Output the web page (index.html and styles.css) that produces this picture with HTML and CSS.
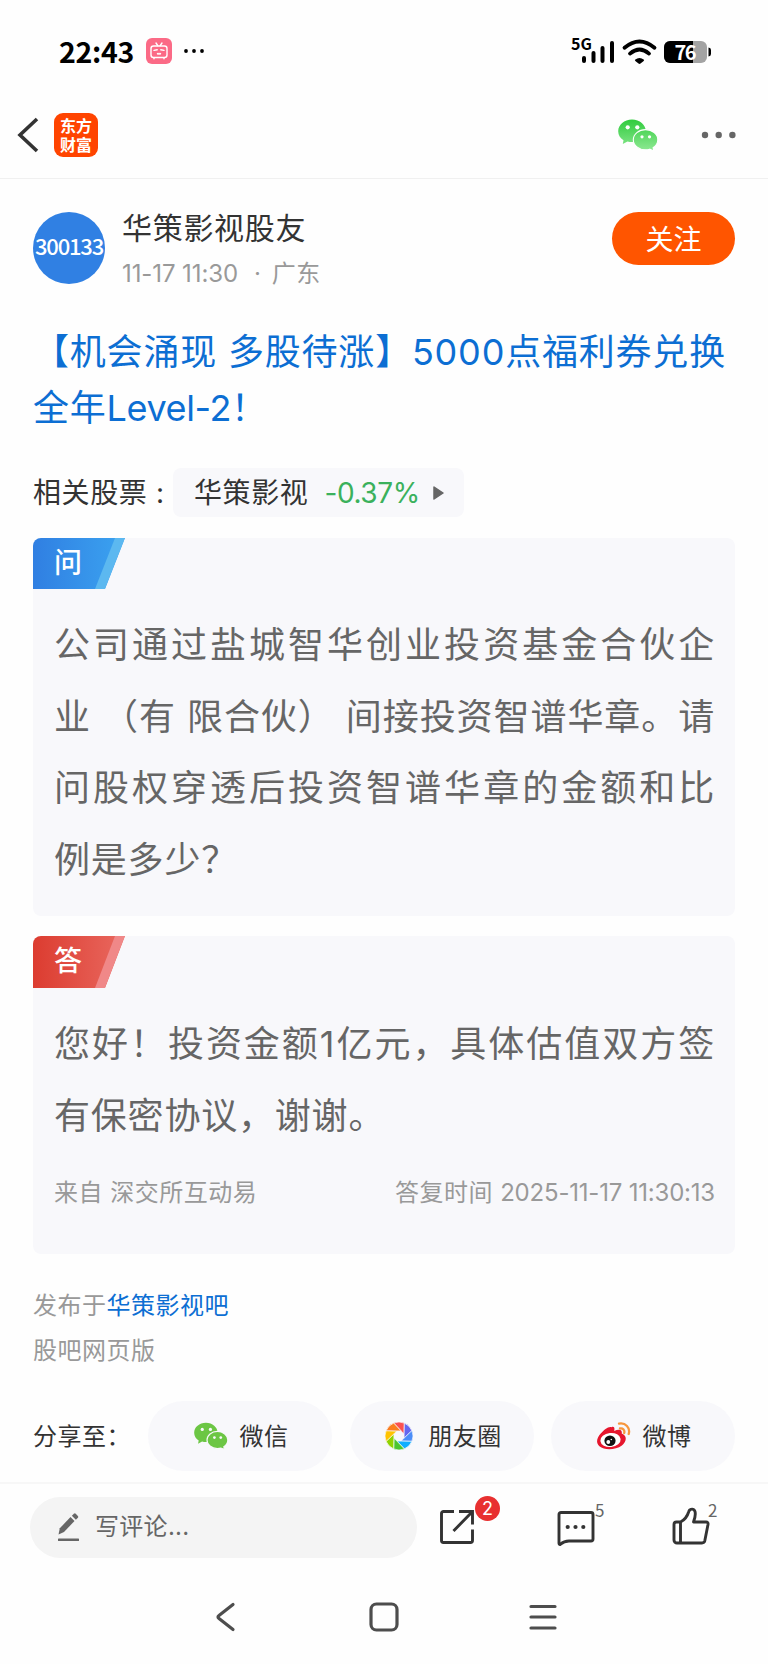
FILE: index.html
```html
<!DOCTYPE html>
<html lang="zh-CN">
<head>
    <meta charset="UTF-8">
    <meta name="viewport" content="width=device-width, initial-scale=1.0">
    <title>华策影视股友 - 股吧</title>
    <link rel="stylesheet" href="styles.css">
</head>
<body>
    <div class="status-bar">
        <span class="time">22:43</span>
        <svg class="bili" width="26" height="26" viewBox="0 0 26 26">
            <rect width="26" height="26" rx="6" fill="#fb6a86"/>
            <g fill="none" stroke="#fff" stroke-width="1.4" stroke-linecap="round">
                <rect x="5" y="8" width="16" height="11.5" rx="2.5"/>
                <path d="M10 5l1.8 2.6M16 5l-1.8 2.6M8 20.2v.6M18 20.2v.6M8 12.4l3.2-.6M18 12.4l-3.2-.6M11.5 15.6q.8.7 1.5 0q.7.7 1.5 0"/>
            </g>
        </svg>
        <svg class="more-dots" width="20" height="6" viewBox="0 0 20 6">
            <circle cx="2" cy="3" r="1.9"/><circle cx="10" cy="3" r="1.9"/><circle cx="18" cy="3" r="1.9"/>
        </svg>
        <svg class="status-icons" width="144" height="30" viewBox="0 0 144 30">
            <text x="0" y="13.500" font-size="16" font-weight="700" textLength="21">5G</text>
            <rect x="11" y="20" width="4" height="7" rx="2"/>
            <rect x="20.500" y="15" width="4" height="12" rx="2"/>
            <rect x="29.500" y="10" width="4" height="17" rx="2"/>
            <rect x="39" y="5" width="4" height="22" rx="2"/>
            <g fill="none" stroke="#000" stroke-width="3.800" stroke-linecap="round">
                <path d="M53.500 11.800q15-12.600 30 0"/>
                <path d="M59 17.600q9.500-8.200 19 0"/>
            </g>
            <path d="M64 23.700q4.500-3.600 9 0q.3.600-.3 1.200l-3.200 2.700q-1 .7-2 0l-3.200-2.700q-.6-.6-.3-1.200z"/>
            <rect x="93" y="5" width="43" height="22" rx="6" fill="#a3a3a3"/>
            <path d="M99 5h23v22h-23a6 6 0 0 1-6-6v-10a6 6 0 0 1 6-6z"/>
            <path d="M137.500 11.500q2.500.3 2.500 2.500v4q0 2.200-2.500 2.500z"/>
            <text x="103.500" y="23.500" font-size="20" font-weight="700" fill="#fff" textLength="22">76</text>
        </svg>
    </div>

    <header class="nav-bar">
        <svg class="back" width="22" height="36" viewBox="0 0 22 36">
            <path d="M20 2L3 18L20 34" fill="none" stroke="#333" stroke-width="3.600"/>
        </svg>
        <div class="logo">东方<br>财富</div>
        <svg class="wechat" width="40" height="32" viewBox="0 0 40 32">
            <defs>
                <linearGradient id="wx" x1="0" y1="0" x2="0" y2="32" gradientUnits="userSpaceOnUse">
                    <stop offset="0" stop-color="#2fcb3c"/>
                    <stop offset="1" stop-color="#8fe994"/>
                </linearGradient>
            </defs>
            <path fill="url(#wx)" d="M14 .5C6.300.5.200 5.700.200 12.200c0 3.700 2 7 5.300 9.100L4.800 25l4.700-2.500c1.400.4 3 .6 4.500.6c7.700 0 13.800-4.700 13.800-11S21.700.5 14 .5z"/>
            <path fill="url(#wx)" stroke="#fff" stroke-width="1.100" d="M27.500 10.600c-6.800 0-12.200 4.500-12.200 10.100s5.400 10.100 12.200 10.100c1.500 0 2.900-.2 4.200-.6l4.200 1.800l-.8-3.300c2.800-1.900 4.700-4.700 4.700-8c0-5.600-5.500-10.100-12.300-10.100z"/>
            <g fill="#fff"><circle cx="9.700" cy="8.300" r="2.100"/><circle cx="19.300" cy="8.300" r="2.100"/><circle cx="24" cy="17.800" r="1.600"/><circle cx="31.500" cy="17.800" r="1.600"/></g>
        </svg>
        <svg class="menu" width="36" height="8" viewBox="0 0 36 8" fill="#666">
            <circle cx="4" cy="4" r="3.200"/><circle cx="17.700" cy="4" r="3.200"/><circle cx="31.400" cy="4" r="3.200"/>
        </svg>
    </header>

    <main class="post">
        <div class="author">
            <div class="avatar">300133</div>
            <div class="author-info">
                <div class="name">华策影视股友</div>
                <div class="date">11-17 11:30<span class="dot">·</span><span class="area">广东</span></div>
            </div>
            <button class="follow">关注</button>
        </div>

        <h1 class="title">【机会涌现 多股待涨】5000点福利券兑换全年<span class="latin">Level-2</span>！</h1>

        <div class="related">
            <span class="related-label">相关股票 :</span>
            <a class="stock">
                <span class="stock-name">华策影视</span>
                <span class="change">-0.37%</span>
                <svg width="11" height="14" viewBox="0 0 11 14"><path d="M1 1L10 7L1 13z" fill="#666" stroke="#666" stroke-width="1.500" stroke-linejoin="round"/></svg>
            </a>
        </div>

        <section class="card question">
            <div class="tag">问</div>
            <p>公司通过盐城智华创业投资基金合伙企业 （有 限合伙） 间接投资智谱华章。请问股权穿透后投资智谱华章的金额和比例是多少？</p>
        </section>

        <section class="card answer">
            <div class="tag">答</div>
            <p>您好！投资金额1亿元，具体估值双方签有保密协议，谢谢。</p>
            <div class="meta">
                <span>来自 深交所互动易</span>
                <span>答复时间 <span class="reply-time">2025-11-17 11:30:13</span></span>
            </div>
        </section>

        <div class="source">
            <div>发布于<a>华策影视吧</a></div>
            <div>股吧网页版</div>
        </div>

        <div class="share">
            <span class="share-label">分享至：</span>
            <a class="pill">
                <svg width="34" height="28" viewBox="0 0 40 32">
                    <path fill="#6cc644" d="M14 .5C6.300.5.200 5.700.200 12.200c0 3.700 2 7 5.300 9.100L4.800 25l4.700-2.500c1.400.4 3 .6 4.500.6c7.700 0 13.800-4.700 13.800-11S21.700.5 14 .5z"/>
                    <path fill="#6cc644" stroke="#f8f8fb" stroke-width="1.400" d="M27.500 10.600c-6.800 0-12.200 4.500-12.200 10.100s5.400 10.100 12.200 10.100c1.500 0 2.900-.2 4.200-.6l4.200 1.800l-.8-3.300c2.800-1.900 4.700-4.700 4.700-8c0-5.600-5.500-10.100-12.300-10.100z"/>
                    <g fill="#f8f8fb"><circle cx="9.700" cy="8.300" r="1.900"/><circle cx="19.300" cy="8.300" r="1.900"/><circle cx="24" cy="17.800" r="1.600"/><circle cx="31.500" cy="17.800" r="1.600"/></g>
                </svg>
                <span>微信</span>
            </a>
            <a class="pill moments">
                <svg width="28" height="28" viewBox="-14 -14 28 28">
                    <g stroke="#f8f8fb" stroke-width=".7">
                        <path fill="#fa5151" d="M-5.400 -12.900A14 14 0 0 1 5.400 -12.900L5.100 -2.100L2.100 -5.100z"/>
                        <path fill="#6467f0" transform="rotate(45)" d="M-5.400 -12.900A14 14 0 0 1 5.400 -12.900L5.100 -2.100L2.100 -5.100z"/>
                        <path fill="#4b8df8" transform="rotate(90)" d="M-5.400 -12.900A14 14 0 0 1 5.400 -12.900L5.100 -2.100L2.100 -5.100z"/>
                        <path fill="#10aeff" transform="rotate(135)" d="M-5.400 -12.900A14 14 0 0 1 5.400 -12.900L5.100 -2.100L2.100 -5.100z"/>
                        <path fill="#4cc52f" transform="rotate(180)" d="M-5.400 -12.900A14 14 0 0 1 5.400 -12.900L5.100 -2.100L2.100 -5.100z"/>
                        <path fill="#91d300" transform="rotate(225)" d="M-5.400 -12.900A14 14 0 0 1 5.400 -12.900L5.100 -2.100L2.100 -5.100z"/>
                        <path fill="#ffc300" transform="rotate(270)" d="M-5.400 -12.900A14 14 0 0 1 5.400 -12.900L5.100 -2.100L2.100 -5.100z"/>
                        <path fill="#fa7d1e" transform="rotate(315)" d="M-5.400 -12.900A14 14 0 0 1 5.400 -12.900L5.100 -2.100L2.100 -5.100z"/>
                    </g>
                </svg>
                <span>朋友圈</span>
            </a>
            <a class="pill">
                <svg width="34" height="28" viewBox="0 0 34 28">
                    <path fill="#e6162d" d="M14.500 5.300c2.200-1.200 3.500.1 2.700 3.600c4-1.700 8.500-1.900 7.500 2.700c6 2.200 4.700 8.600.2 11.900c-6.500 4.700-17.500 5-22.500.8C-1.800 20.500.3 15.500 3.700 11.600C7 7.800 12 3.800 14.500 5.300z"/>
                    <ellipse cx="13.500" cy="18" rx="10.200" ry="7" fill="#fff" transform="rotate(-6 13.500 18)"/>
                    <ellipse cx="13" cy="18.700" rx="5.600" ry="5.300" fill="#111"/>
                    <circle cx="11.300" cy="20" r="1.900" fill="#fff"/><circle cx="14.300" cy="17.500" r=".8" fill="#fff"/>
                    <path d="M22 1.600c6.500-1.200 11.500 4 9.700 10.400M23 6.500c3-.6 5 1.700 4.200 4.500" fill="none" stroke="#f7963c" stroke-width="2.300" stroke-linecap="round"/>
                </svg>
                <span>微博</span>
            </a>
        </div>
    </main>

    <footer class="comment-bar">
        <div class="comment-input">
            <svg width="22" height="30" viewBox="0 0 22 30" fill="#666">
                <path d="M.5 22.500l1.300-6.200L12.500 5l4 4L6 20z"/>
                <path d="M13.900 3.700l2-2q.9-.8 1.800 0l2.200 2.200q.8.900 0 1.800l-2 2z"/>
                <rect x="0" y="26.500" width="21" height="2.600" rx=".6"/>
            </svg>
            <span>写评论...</span>
        </div>
        <div class="action share-action">
            <svg width="36" height="36" viewBox="0 0 36 36" fill="none" stroke="#333" stroke-width="2.900">
                <path d="M15 2.500H4.500a2 2 0 0 0-2 2V31.500a2 2 0 0 0 2 2H31.500a2 2 0 0 0 2-2V20.500"/>
                <path d="M20 2.500H33.500V15.500M33 3L14.500 22"/>
            </svg>
            <span class="badge">2</span>
        </div>
        <div class="action chat-action">
            <svg width="38" height="36" viewBox="0 0 38 36" fill="none" stroke="#333" stroke-width="2.900" stroke-linejoin="round">
                <path d="M4 2.500H34a2 2 0 0 1 2 2V29a2 2 0 0 1-2 2H12q-5 0-8.500 3.300q-1.500.6-1.500-1V4.500a2 2 0 0 1 2-2z"/>
                <g fill="#333" stroke="none"><circle cx="10.700" cy="17" r="2.100"/><circle cx="18.500" cy="17" r="2.100"/><circle cx="26.300" cy="17" r="2.100"/></g>
            </svg>
            <span class="count">5</span>
        </div>
        <div class="action like-action">
            <svg width="38" height="38" viewBox="0 0 38 38" fill="none" stroke="#333" stroke-width="2.900" stroke-linejoin="round">
                <path d="M8.500 15H4.500a2.500 2.500 0 0 0-2.500 2.500V33a3 3 0 0 0 3 3H30q2.300 0 2.800-2.200L36 17.500q.4-2.500-2-2.500H21.500Q24 8.500 23 4.500Q21.800 1.500 18.800 2.300Q17.300 2.700 16.800 4.500Q14.500 12 8.500 15V36"/>
            </svg>
            <span class="count">2</span>
        </div>
    </footer>

    <div class="system-nav">
        <svg width="30" height="30" viewBox="0 0 30 30"><path d="M23 2.500L9 13.500q-2 1.500 0 3L23 27.500"/></svg>
        <svg width="30" height="30" viewBox="0 0 30 30"><rect x="2" y="2" width="26" height="26" rx="5.500"/></svg>
        <svg width="30" height="30" viewBox="0 0 30 30"><path d="M3 4.500H27M3 15H27M3 26H27"/></svg>
    </div>
</body>
</html>
```

FILE: styles.css
```css
* {
    box-sizing: border-box;
}
body {
    margin: 0;
    width: 768px;
    height: 1664px;
    overflow: hidden;
    background: #fefefe;
    color: #333;
    font-family: Inter, "Noto Sans CJK SC", sans-serif;
}
svg {
    display: block;
    flex: none;
}

/* 状态栏 */
.status-bar {
    height: 92px;
    padding: 10px 56px 0 59px;
    display: flex;
    align-items: center;
    color: #000;
    font-family: "Noto Sans CJK SC", sans-serif;
}
.time {
    width: 74px;
    font-size: 28.5px;
    font-weight: 700;
    letter-spacing: -0.3px;
    line-height: 40px;
    white-space: nowrap;
}
.bili {
    margin-left: 13px;
}
.more-dots {
    margin-left: 12px;
}
.status-icons {
    margin-left: auto;
    margin-right: -3px;
    overflow: visible;
}

/* 顶部导航 */
.nav-bar {
    height: 87px;
    padding: 0 31px 0 17px;
    display: flex;
    align-items: center;
    border-bottom: 1px solid #f0f0f0;
}
.logo {
    width: 44px;
    height: 44px;
    margin-left: 15px;
    padding-top: 3px;
    border-radius: 9px;
    background: #ff4400;
    color: #fff;
    font-family: "Noto Sans CJK SC", sans-serif;
    font-size: 16px;
    font-weight: 700;
    line-height: 18.5px;
    text-align: center;
}
.wechat {
    margin-left: auto;
}
.menu {
    margin-left: 43px;
}

.post {
    height: 1303px;
    padding: 33px 33px 0;
}
.author {
    height: 72px;
    display: flex;
}
.avatar {
    width: 72px;
    height: 72px;
    border-radius: 50%;
    background: #3080e3;
    color: #fff;
    font-family: "Noto Sans CJK SC", sans-serif;
    font-size: 22px;
    font-weight: 500;
    letter-spacing: -1.2px;
    line-height: 67px;
    text-align: center;
}
.author-info {
    margin-left: 17px;
}
.name {
    font-size: 30px;
    letter-spacing: 0.7px;
    line-height: 33px;
}
.date {
    margin-top: 12px;
    font-size: 24px;
    letter-spacing: -0.1px;
    line-height: 34px;
    color: #999;
}
.dot {
    margin: 0 11px 0 16px;
}
.area {
    letter-spacing: 0.5px;
}
.follow {
    width: 123px;
    height: 53px;
    margin-left: auto;
    padding: 0 0 2px;
    border: none;
    border-radius: 27px;
    background: #ff5500;
    color: #fff;
    font-family: inherit;
    font-size: 28px;
}
.title {
    margin: 41px 0 0;
    font-size: 36px;
    font-weight: 400;
    letter-spacing: 0.8px;
    line-height: 55.5px;
    color: #0c6ed3;
}
.latin {
    letter-spacing: -0.4px;
}

/* 相关股票 */
.related {
    margin-top: 32px;
    display: flex;
    align-items: center;
    font-size: 28px;
    letter-spacing: 0.6px;
}
.related-label {
    width: 140px;
    padding-bottom: 3px;
    white-space: nowrap;
}
.stock {
    width: 291px;
    height: 49px;
    padding-left: 21px;
    display: flex;
    align-items: center;
    border-radius: 8px;
    background: #f8f8fb;
}
.stock-name {
    padding-bottom: 3px;
}
.change {
    width: 93px;
    margin: 0 16px;
    color: #3bb15c;
    letter-spacing: -0.4px;
}

/* 问答卡片 */
.card {
    width: 702px;
    margin-top: 21px;
    border-radius: 8px;
    background: #f8f8fb;
    overflow: hidden;
}
.question {
    height: 378px;
}
.answer {
    height: 318px;
    margin-top: 20px;
}
.tag {
    position: relative;
    width: 92px;
    height: 51px;
    padding-left: 21px;
    color: #fff;
    font-size: 28px;
    font-weight: 500;
    line-height: 50px;
    clip-path: polygon(0 0, 100% 0, 72px 100%, 0 100%);
}
/* 右侧浅色斜条 */
.tag::after {
    content: "";
    position: absolute;
    top: 0;
    right: 0;
    width: 30px;
    height: 51px;
    clip-path: polygon(20px 0, 100% 0, 10px 100%, 0 100%);
}
.question .tag {
    background: linear-gradient(90deg, #307fe2, #3ba3f0);
}
.question .tag::after {
    background: #5cb8f0;
}
.answer .tag {
    height: 52px;
    background: linear-gradient(90deg, #dc3c30, #e9685f);
}
.answer .tag::after {
    height: 52px;
    background: #f08888;
}
.card p {
    margin: 21px 20px 0 21px;
    color: #666;
    font-size: 36px;
    letter-spacing: 0.8px;
    line-height: 71.6px;
    text-align: justify;
}
.meta {
    margin: 21px 20px 0 21px;
    display: flex;
    justify-content: space-between;
    color: #999;
    font-size: 24px;
    letter-spacing: 0.5px;
    line-height: 40px;
}
.reply-time {
    letter-spacing: -0.2px;
}

.source {
    margin-top: 29px;
    color: #999;
    font-size: 24px;
    letter-spacing: 0.5px;
    line-height: 45px;
}
.source a {
    color: #0c6ed3;
}

/* 分享 */
.share {
    margin-top: 28px;
    display: flex;
    align-items: center;
    font-size: 24px;
    letter-spacing: 0.5px;
}
.share-label {
    width: 115px;
    padding-bottom: 3px;
}
.pill {
    width: 184px;
    height: 70px;
    padding-left: 2px;
    display: flex;
    align-items: center;
    justify-content: center;
    gap: 12px;
    border-radius: 35px;
    background: #f8f8fb;
}
.pill span {
    padding-bottom: 3px;
}
.pill + .pill {
    margin-left: 17.5px;
}
.pill.moments {
    gap: 15px;
    padding-left: 4px;
}

/* 底部评论栏 */
.comment-bar {
    height: 90px;
    padding: 0 0 0 30px;
    display: flex;
    align-items: flex-start;
    border-top: 2px solid #f7f7f7;
}
.comment-input {
    width: 387px;
    height: 61px;
    margin-top: 13px;
    padding: 0 0 1px 28px;
    display: flex;
    align-items: center;
    gap: 15px;
    border-radius: 31px;
    background: #f4f4f4;
    color: #666;
    font-size: 24px;
    letter-spacing: 0.3px;
}
.comment-input span {
    padding-bottom: 5px;
}
.action {
    position: relative;
}
.share-action {
    margin: 25px 0 0 22px;
}
.chat-action {
    margin: 26px 0 0 82px;
}
.like-action {
    margin: 23px 0 0 77px;
}
.badge {
    position: absolute;
    left: 36px;
    top: -13px;
    width: 25px;
    height: 25px;
    border-radius: 50%;
    background: #e83030;
    color: #fff;
    font-size: 18px;
    line-height: 25px;
    text-align: center;
}
.count {
    position: absolute;
    left: 38px;
    top: -10px;
    color: #666;
    font-family: "Noto Sans CJK SC", sans-serif;
    font-size: 17px;
    line-height: 20px;
}
.like-action .count {
    left: 36px;
    top: -7px;
}

.system-nav {
    height: 92px;
    padding-top: 30px;
    display: flex;
    justify-content: center;
    gap: 129px;
    fill: none;
    stroke: #4d4d4d;
    stroke-width: 3.2;
    stroke-linecap: round;
}
```
